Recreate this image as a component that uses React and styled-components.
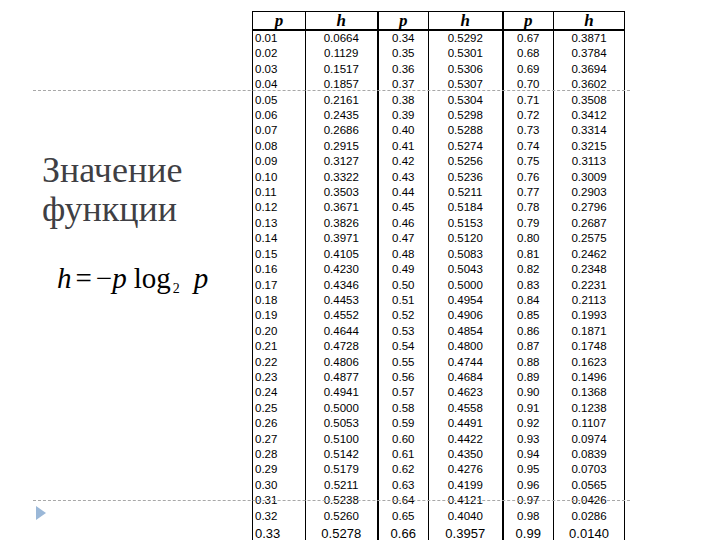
import React from "react"
import styled, { createGlobalStyle } from "styled-components"

const GlobalStyle = createGlobalStyle`
  html, body {
    margin: 0;
    padding: 0;
    background: #ffffff;
  }
`

const Slide = styled.div`
  position: relative;
  width: 720px;
  height: 540px;
  overflow: hidden;
  display: flex;
  background: #ffffff;
`

const DashLine = styled.div`
  position: absolute;
  left: 33px;
  width: 597px;
  top: ${(p) => p.$top}px;
  height: 0;
  border-top: 1px dashed #a8a8a8;
`

const LeftPanel = styled.div`
  width: 252px;
  flex-shrink: 0;
  display: flex;
  flex-direction: column;
  padding-top: 151px;
  box-sizing: border-box;
`

const Title = styled.h1`
  margin: 0 0 0 42px;
  font-family: "Liberation Serif", "DejaVu Serif", serif;
  font-weight: normal;
  font-size: 36px;
  line-height: 39px;
  color: #3f3f44;
`

const Formula = styled.div`
  display: flex;
  align-items: baseline;
  margin: 33px 0 0 57px;
  font-family: "Liberation Serif", serif;
  font-size: 29px;
  line-height: 32px;
  color: #000;
  white-space: nowrap;
`

const Var = styled.i`
  font-style: italic;
`

const Op = styled.span`
  margin: 0 ${(p) => p.$gap || 0}px;
`

const Log = styled.span`
  margin-left: 7px;
`

const Sub = styled.span`
  font-size: 14px;
  position: relative;
  top: 5px;
  margin-left: 2px;
  margin-right: 14px;
`

const Marker = styled.div`
  position: absolute;
  left: 36px;
  top: 506px;
  width: 0;
  height: 0;
  border-top: 7px solid transparent;
  border-bottom: 7px solid transparent;
  border-left: 10px solid #9bb8d8;
`

const Table = styled.table`
  margin-top: 11px;
  border-collapse: collapse;
  table-layout: fixed;
  width: 372px;
  font-family: "Liberation Sans", Arial, sans-serif;
  color: #000;
`

const HeadCell = styled.th`
  height: 17px;
  padding: 0;
  font-family: "Liberation Serif", serif;
  font-style: italic;
  font-weight: bold;
  font-size: 17px;
  line-height: 17px;
  text-align: center;
  border-top: 1px solid #000;
  border-bottom: 2px solid #000;
  border-left: ${(p) => p.$lw}px solid #000;
  border-right: ${(p) => p.$rw}px solid #000;
`

const Cell = styled.td`
  height: ${(p) => (p.$last ? 20 : 15.4)}px;
  padding: 0 0 0 ${(p) => (p.$align === "left" ? 2 : 0)}px;
  font-size: ${(p) => (p.$last ? 13 : 11.5)}px;
  line-height: ${(p) => (p.$last ? 20 : 15.4)}px;
  text-align: ${(p) => p.$align};
  white-space: nowrap;
  border-left: ${(p) => p.$lw}px solid #000;
  border-right: ${(p) => p.$rw}px solid #000;
`

const colWidths = [53, 72, 51, 74, 51, 71]
const leftBorders = [1, 1, 2, 1, 2, 1]
const rightBorders = [1, 2, 1, 2, 1, 1]

const h1 = ["0.0664","0.1129","0.1517","0.1857","0.2161","0.2435","0.2686","0.2915","0.3127","0.3322","0.3503","0.3671","0.3826","0.3971","0.4105","0.4230","0.4346","0.4453","0.4552","0.4644","0.4728","0.4806","0.4877","0.4941","0.5000","0.5053","0.5100","0.5142","0.5179","0.5211","0.5238","0.5260","0.5278"]
const h2 = ["0.5292","0.5301","0.5306","0.5307","0.5304","0.5298","0.5288","0.5274","0.5256","0.5236","0.5211","0.5184","0.5153","0.5120","0.5083","0.5043","0.5000","0.4954","0.4906","0.4854","0.4800","0.4744","0.4684","0.4623","0.4558","0.4491","0.4422","0.4350","0.4276","0.4199","0.4121","0.4040","0.3957"]
const h3 = ["0.3871","0.3784","0.3694","0.3602","0.3508","0.3412","0.3314","0.3215","0.3113","0.3009","0.2903","0.2796","0.2687","0.2575","0.2462","0.2348","0.2231","0.2113","0.1993","0.1871","0.1748","0.1623","0.1496","0.1368","0.1238","0.1107","0.0974","0.0839","0.0703","0.0565","0.0426","0.0286","0.0140"]

const rows = h1.map((_, i) => [
  ((i + 1) / 100).toFixed(2),
  h1[i],
  ((i + 34) / 100).toFixed(2),
  h2[i],
  ((i + 67) / 100).toFixed(2),
  h3[i],
])

const headers = ["p", "h", "p", "h", "p", "h"]

function App() {
  return (
    <Slide>
      <GlobalStyle />
      <DashLine $top={90} />
      <DashLine $top={500} />
      <Marker />
      <LeftPanel>
        <Title>
          Значение
          <br />
          функции
        </Title>
        <Formula>
          <Var>h</Var>
          <Op $gap={4}>=</Op>
          <Op>−</Op>
          <Var>p</Var>
          <Log>log</Log>
          <Sub>2</Sub>
          <Var>p</Var>
        </Formula>
      </LeftPanel>
      <Table>
        <colgroup>
          {colWidths.map((w, i) => (
            <col key={i} style={{ width: w }} />
          ))}
        </colgroup>
        <thead>
          <tr>
            {headers.map((t, i) => (
              <HeadCell key={i} $lw={leftBorders[i]} $rw={rightBorders[i]}>
                {t}
              </HeadCell>
            ))}
          </tr>
        </thead>
        <tbody>
          {rows.map((r, ri) => (
            <tr key={ri}>
              {r.map((v, ci) => (
                <Cell
                  key={ci}
                  $align={ci === 0 ? "left" : "center"}
                  $lw={leftBorders[ci]}
                  $rw={rightBorders[ci]}
                  $last={ri === rows.length - 1}
                >
                  {v}
                </Cell>
              ))}
            </tr>
          ))}
        </tbody>
      </Table>
    </Slide>
  )
}

export default App
